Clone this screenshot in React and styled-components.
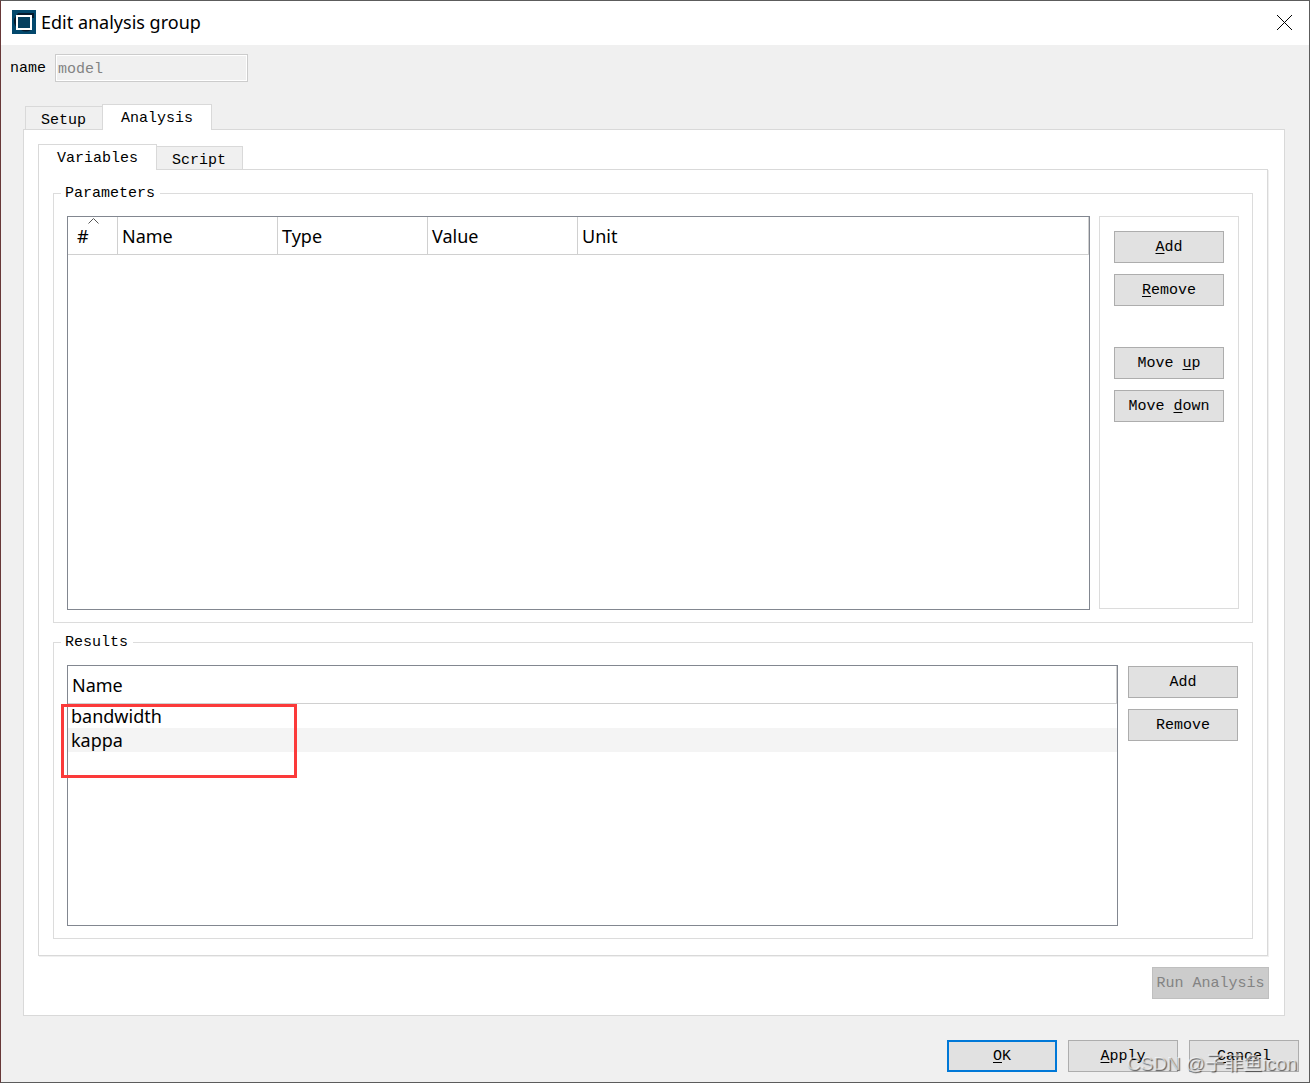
import React from "react";
import styled, { createGlobalStyle, css } from "styled-components";

const mono = `"Liberation Mono", "Noto Sans CJK SC", monospace`;
const sans = `"Noto Sans", "Noto Sans CJK SC", sans-serif`;

const GlobalStyle = createGlobalStyle`
  *, *::before, *::after { box-sizing: border-box; }
  body { margin: 0; background: #f0f0f0; color: #000; font: 15px/20px ${mono}; }
  button, input { font: inherit; color: inherit; margin: 0; border-radius: 0; }
`;

const Window = styled.div`
  position: relative;
  display: flex;
  flex-direction: column;
  min-height: 100vh;
  border: 1px solid #5c5c5c;
  border-left-color: #673838;
  background: #f0f0f0;
`;

const TitleBar = styled.header`
  display: flex;
  align-items: center;
  height: 44px;
  padding: 0 16px 2px 11px;
  background: #fff;
`;

const Title = styled.h1`
  flex: 1;
  margin: 0 0 0 5px;
  font: 400 18px/24px ${sans};
`;

const CloseButton = styled.button`
  display: flex;
  padding: 0;
  border: 0;
  background: none;
`;

const NameRow = styled.div`
  display: flex;
  align-items: center;
  gap: 9px;
  padding: 9px 9px 22px;
`;

const NameLabel = styled.label`
  padding-top: 2px;
`;

const NameInput = styled.input`
  width: 193px;
  height: 28px;
  padding: 2px 2px 0;
  border: 1px solid #ccc;
  box-shadow: inset 0 0 0 1px #fff;
  background: #f0f0f0;
  &:disabled { color: #838383; }
`;

const Tabs = styled.div`
  display: flex;
  flex: 1;
  flex-direction: column;
`;

const OuterTabs = styled(Tabs)`
  margin: 0 24px 24px 22px;
`;

const TabList = styled.div`
  display: flex;
  align-items: flex-end;
  height: 26px;
  margin-bottom: -1px;
  padding-left: ${(p) => (p.$indent ? "2px" : "0")};
  z-index: 1;
`;

const Tab = styled.button`
  height: 24px;
  padding: 4px 16px 0 15px;
  border: 1px solid #d9d9d9;
  background: #f0f0f0;
  line-height: 20px;
  & + & { margin-left: -1px; }
  ${(p) =>
    p.$active &&
    css`
      height: 26px;
      padding: 2px 18px 0;
      border-bottom: 0;
      background: #fff;
    `}
`;

const OuterPanel = styled.section`
  display: flex;
  flex: 1;
  flex-direction: column;
  padding: 14px 15px 16px 14px;
  border: 1px solid #d9d9d9;
  background: #fff;
`;

const InnerPanel = styled.section`
  display: flex;
  flex: 1;
  flex-direction: column;
  gap: 9px;
  margin-right: 1px;
  padding: 13px 14px 16px;
  border: 1px solid #d9d9d9;
  box-shadow: 1px 1px 0 #f0f0f0;
`;

const Group = styled.fieldset`
  display: flex;
  gap: ${(p) => (p.$framed ? "9px" : "10px")};
  min-width: 0;
  margin: 0;
  padding: 13px ${(p) => (p.$framed ? "13px" : "14px")} 12px 13px;
  border: 1px solid #dcdcdc;
`;

const Legend = styled.legend`
  margin-left: -6px;
  padding: 2px 5px 0 4px;
  line-height: 18px;
`;

const TableFrame = styled.div`
  position: relative;
  flex: 1;
  min-width: 0;
  min-height: ${(p) => (p.$tall ? "max(261px, calc(100vh - 689px))" : "261px")};
  border: 1px solid #828790;
`;

const Table = styled.table`
  width: 100%;
  table-layout: fixed;
  border-collapse: separate;
  border-spacing: 0;
  font: 18px/24px ${sans};
`;

const HeadCell = styled.th`
  position: relative;
  width: ${(p) => (p.$width ? `${p.$width}px` : "auto")};
  height: 38px;
  padding: 0 4px 0 ${(p) => (p.$first ? "9px" : "4px")};
  border-right: 1px solid #d0d0d0;
  border-bottom: 1px solid #d0d0d0;
  font-weight: 400;
  text-align: left;
`;

const SortMark = styled.svg`
  position: absolute;
  top: 1px;
  left: 20px;
`;

const Cell = styled.td`
  height: 24px;
  padding: 0 3px;
  tr:nth-child(even) > & { background: #f4f4f4; }
`;

const Marker = styled.div`
  position: absolute;
  top: 38px;
  left: -7px;
  width: 236px;
  height: 74px;
  border: 3px solid #fb3a3a;
  pointer-events: none;
`;

const ButtonColumn = styled.div`
  display: flex;
  flex-direction: column;
  gap: 11px;
  padding-top: 1px;
`;

const ButtonFrame = styled(ButtonColumn)`
  padding: 14px;
  margin-bottom: 1px;
  border: 1px solid #dcdcdc;
`;

const Button = styled.button`
  width: ${(p) => (p.$wide ? "117px" : "110px")};
  height: 32px;
  padding: 2px 0 0;
  border: ${(p) => (p.$primary ? "2px solid #0078d7" : "1px solid #adadad")};
  background: #e1e1e1;
  &:disabled {
    border-color: #bfbfbf;
    background: #ccc;
    color: #838383;
  }
`;

const MoveGroup = styled.div`
  display: flex;
  flex-direction: column;
  gap: 11px;
  margin-top: 30px;
`;

const Key = styled.span`
  text-decoration: underline;
  text-decoration-thickness: 1px;
  text-underline-offset: 2px;
`;

const RunRow = styled.div`
  display: flex;
  justify-content: flex-end;
  margin-top: 11px;
`;

const Footer = styled.footer`
  display: flex;
  justify-content: flex-end;
  gap: 11px;
  padding: 0 10px 10px;
`;

const Watermark = styled.div`
  position: absolute;
  right: 12px;
  bottom: 6px;
  color: rgba(255, 255, 255, 0.6);
  font: 19px/24px "Liberation Sans", "Noto Sans CJK SC", sans-serif;
  text-shadow: 1px 1px 1px rgba(0, 0, 0, 0.6);
  pointer-events: none;
`;

const columns = [
  { name: "#", width: 50 },
  { name: "Name", width: 160 },
  { name: "Type", width: 150 },
  { name: "Value", width: 150 },
  { name: "Unit" },
];
const results = ["bandwidth", "kappa"];

function AppIcon() {
  return (
    <svg width="24" height="24" viewBox="0 0 24 24" aria-hidden="true">
      <rect width="24" height="24" fill="#03486c" />
      <path d="M6 3h16v5h-3v12q-5 3-10 0Q1 17 2 9z" fill="#06182a" />
      <rect x="5" y="6" width="14" height="13" fill="#05405f" stroke="#fff" strokeWidth="2" />
    </svg>
  );
}

export default function App() {
  return (
    <>
      <GlobalStyle />
      <Window>
        <TitleBar>
          <AppIcon />
          <Title>Edit analysis group</Title>
          <CloseButton type="button" aria-label="Close">
            <svg width="17" height="17" viewBox="0 0 17 17">
              <path d="M1 1l15 15M16 1L1 16" stroke="#000" fill="none" />
            </svg>
          </CloseButton>
        </TitleBar>

        <NameRow>
          <NameLabel htmlFor="group-name">name</NameLabel>
          <NameInput id="group-name" type="text" defaultValue="model" disabled />
        </NameRow>

        <OuterTabs>
          <TabList role="tablist" $indent>
            <Tab type="button" role="tab" aria-selected="false">Setup</Tab>
            <Tab type="button" role="tab" aria-selected="true" $active>Analysis</Tab>
          </TabList>
          <OuterPanel role="tabpanel">
            <Tabs>
              <TabList role="tablist">
                <Tab type="button" role="tab" aria-selected="true" $active>Variables</Tab>
                <Tab type="button" role="tab" aria-selected="false">Script</Tab>
              </TabList>
              <InnerPanel role="tabpanel">
                <Group $framed>
                  <Legend>Parameters</Legend>
                  <TableFrame $tall>
                    <Table>
                      <thead>
                        <tr>
                          {columns.map((c, i) => (
                            <HeadCell key={c.name} scope="col" $width={c.width} $first={i === 0}>
                              {c.name}
                              {i === 0 && (
                                <SortMark width="11" height="6" viewBox="0 0 11 6" aria-hidden="true">
                                  <path d="M0.5 5.5l5-5 5 5" fill="none" stroke="#555" />
                                </SortMark>
                              )}
                            </HeadCell>
                          ))}
                        </tr>
                      </thead>
                    </Table>
                  </TableFrame>
                  <ButtonFrame>
                    <Button type="button"><Key>A</Key>dd</Button>
                    <Button type="button"><Key>R</Key>emove</Button>
                    <MoveGroup>
                      <Button type="button">Move <Key>u</Key>p</Button>
                      <Button type="button">Move <Key>d</Key>own</Button>
                    </MoveGroup>
                  </ButtonFrame>
                </Group>

                <Group>
                  <Legend>Results</Legend>
                  <TableFrame>
                    <Table>
                      <thead>
                        <tr><HeadCell scope="col">Name</HeadCell></tr>
                      </thead>
                      <tbody>
                        {results.map((r) => (
                          <tr key={r}><Cell>{r}</Cell></tr>
                        ))}
                      </tbody>
                    </Table>
                    <Marker />
                  </TableFrame>
                  <ButtonColumn>
                    <Button type="button">Add</Button>
                    <Button type="button">Remove</Button>
                  </ButtonColumn>
                </Group>
              </InnerPanel>
            </Tabs>
            <RunRow>
              <Button type="button" $wide disabled>Run Analysis</Button>
            </RunRow>
          </OuterPanel>
        </OuterTabs>

        <Footer>
          <Button type="button" $primary><Key>O</Key>K</Button>
          <Button type="button"><Key>A</Key>pply</Button>
          <Button type="button"><Key>C</Key>ancel</Button>
        </Footer>
        <Watermark>CSDN @子菲鱼icon</Watermark>
      </Window>
    </>
  );
}
